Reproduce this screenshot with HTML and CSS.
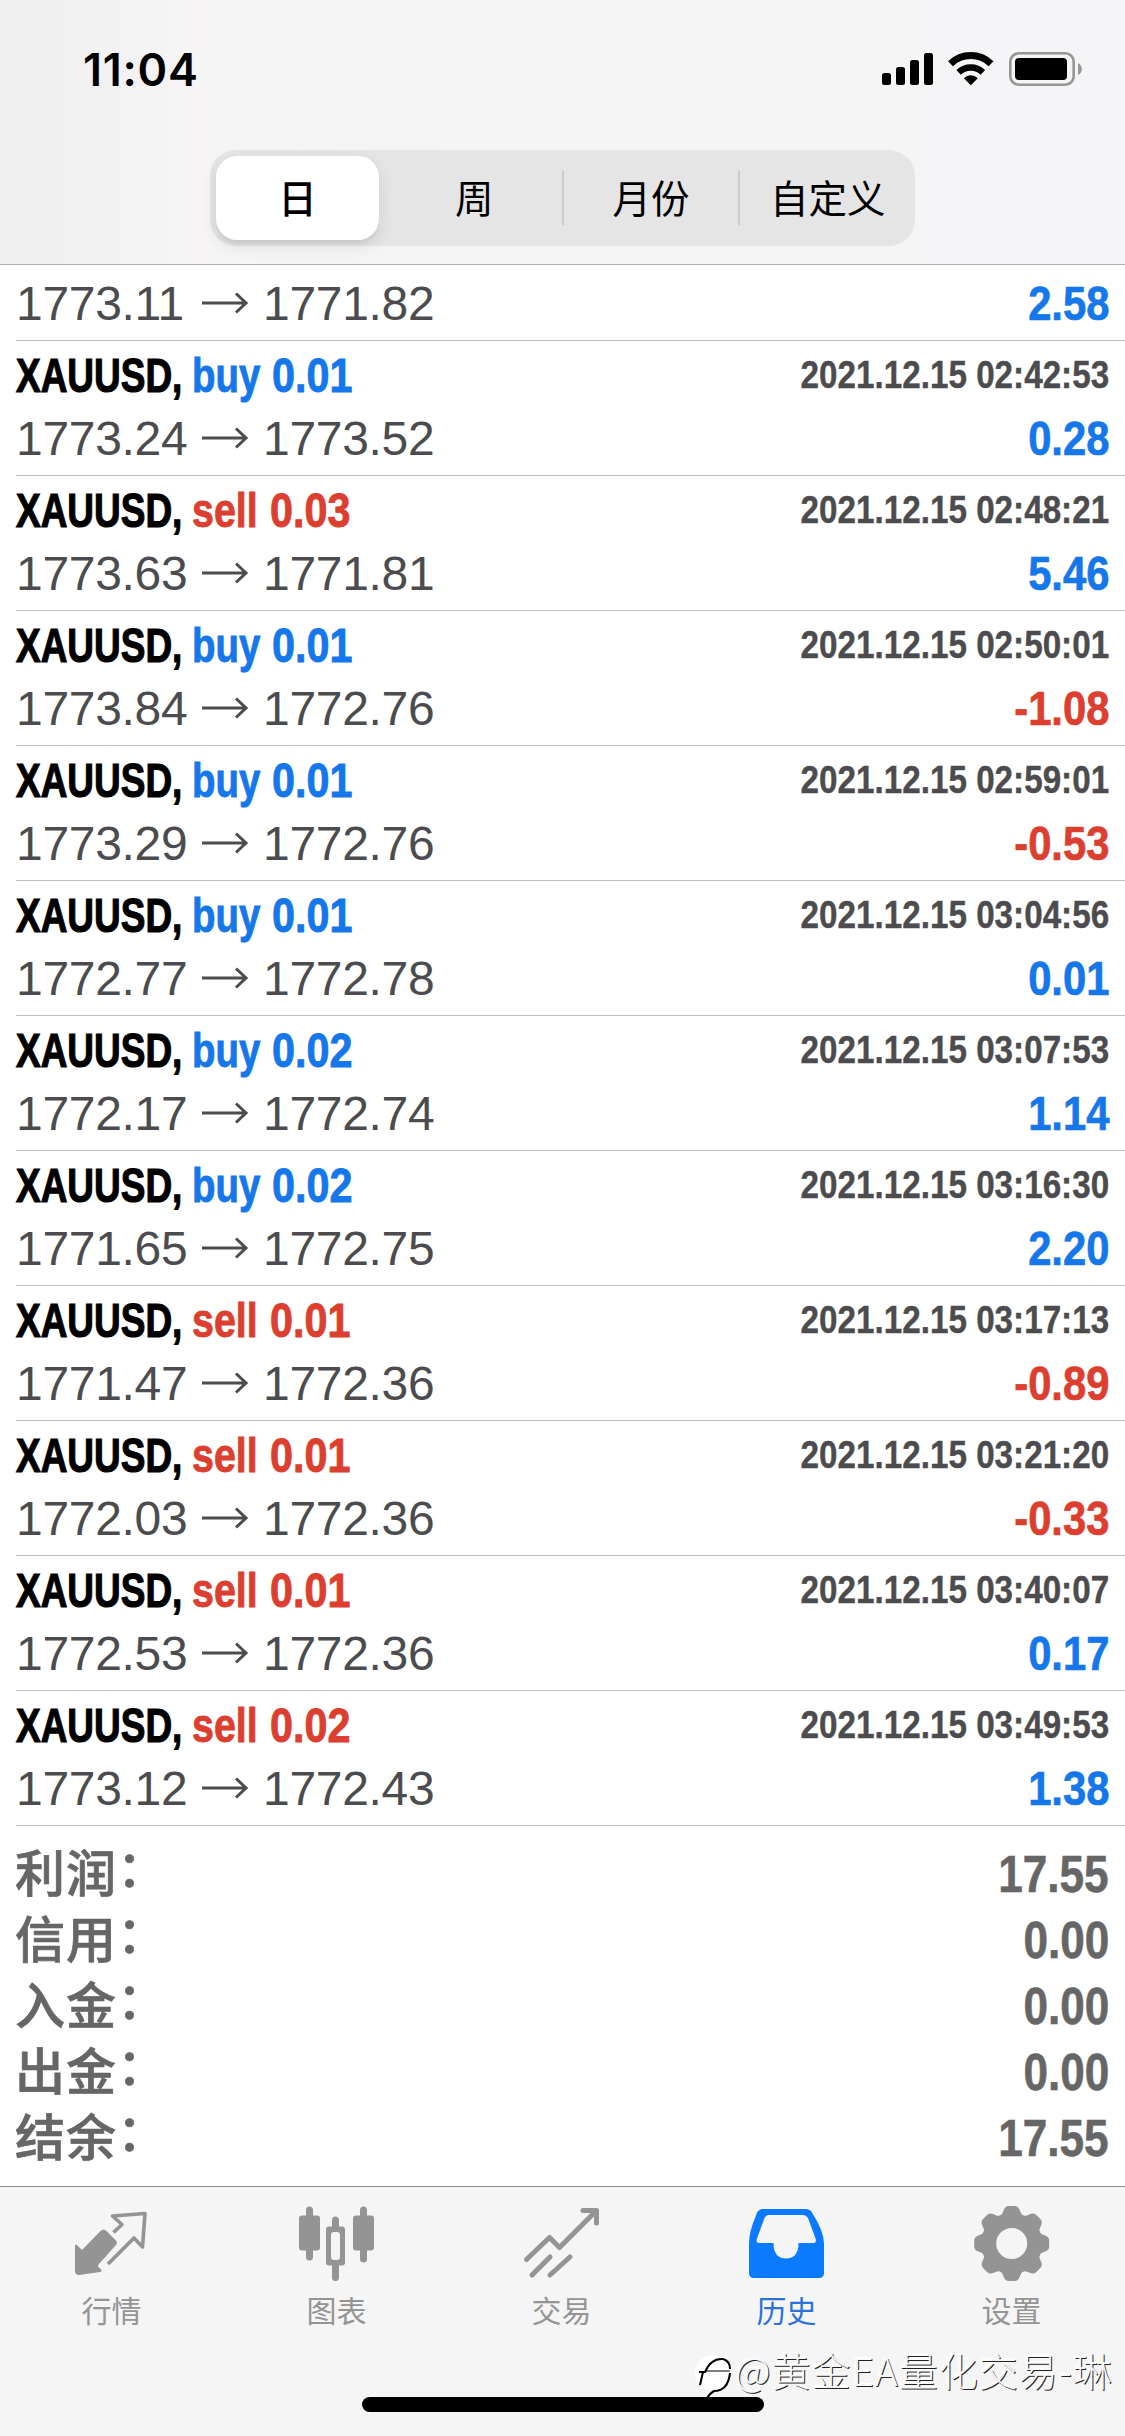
FILE: index.html
```html
<!DOCTYPE html>
<html lang="zh-CN">
<head>
<meta charset="utf-8">
<title>历史</title>
<link rel="stylesheet" href="styles.css">
</head>
<body>
<div class="screen">
  <header class="header">
    <div class="status">
      <span class="clock">11:04</span>
      <svg class="status-icons" width="228" height="40" viewBox="0 0 228 40">
        <rect x="12" y="23" width="9" height="12" rx="2.500"/><rect x="26" y="17" width="9" height="18" rx="2.500"/><rect x="40" y="10" width="9" height="25" rx="2.500"/><rect x="54" y="3" width="9" height="32" rx="2.500"/>
        <g fill="none" stroke="#000"><path stroke-width="7" d="M80.500 13.800a29 29 0 0 1 40.500 0"/><path stroke-width="6.500" d="M88.600 22.400a17.500 17.500 0 0 1 24.300 0"/></g>
        <path d="M100.800 35.200l-7-7a9.900 9.900 0 0 1 14 0z"/>
        <rect x="140.300" y="3.300" width="63.400" height="31.400" rx="8.500" fill="none" stroke="#969696" stroke-width="2.600"/><rect x="145" y="8" width="52" height="22" rx="4"/><path fill="#969696" d="M208 13q3.800 2 3.800 6t-3.800 6z"/>
      </svg>
    </div>
    <nav class="segments">
      <span class="segment segment-on">日</span><span class="segment">周</span><span class="segment divided">月份</span><span class="segment divided">自定义</span>
    </nav>
  </header>
  <main class="history" id="history"></main>
  <section class="summary">
    <div class="total"><span class="total-name">利润</span><span class="colon">：</span><b>17.55</b></div>
    <div class="total"><span class="total-name">信用</span><span class="colon">：</span><b>0.00</b></div>
    <div class="total"><span class="total-name">入金</span><span class="colon">：</span><b>0.00</b></div>
    <div class="total"><span class="total-name">出金</span><span class="colon">：</span><b>0.00</b></div>
    <div class="total"><span class="total-name">结余</span><span class="colon">：</span><b>17.55</b></div>
  </section>
  <footer class="tabs">
    <a class="tab"><svg width="90" height="90" viewBox="0 0 90 90"><path d="M10 29q0-2.500 2-1l5 5L35.500 14q3-3 6 0l9 9q3 3 0 5.500L34 47q-2 2 0 3.500l2 2q1.500 2-1 2.500L14 58q-4 0-4-4z"/><path fill="none" stroke="#949494" stroke-width="3.600" stroke-linejoin="round" d="M48.500 15.500l8.500-8L47.500-1 80-3.500 77.500 30 69 21 43 47"/></svg>行情</a>
    <a class="tab"><svg width="90" height="90" viewBox="0 0 90 90"><rect x="9" y="-1.500" width="21" height="35" rx="3"/><rect x="16" y="-10.500" width="7" height="54" rx="3.500"/><rect x="63" y="-1.500" width="21" height="35" rx="3"/><rect x="70" y="-10.500" width="7" height="56" rx="3.500"/><path fill-rule="evenodd" d="M39 9.500h3V3a3.500 3.500 0 0 1 7 0V9.500h3q3 0 3 3v33q0 3-3 3h-3v12a3.500 3.500 0 0 1-7 0V48.500h-3q-3 0-3-3V12.500q0-3 3-3zm5 5.500q-3 0-3 3v22q0 3 3 3h3q3 0 3-3v-22q0-3-3-3z"/></svg>图表</a>
    <a class="tab"><svg width="90" height="90" viewBox="0 0 90 90"><g fill="none" stroke="#949494" stroke-width="5" stroke-linecap="round" stroke-linejoin="round"><path d="M11.500 42.500l23-22 10 10L81-6M68-6.500h13.500V6M17 58l18-18M35 58l20-18"/></g></svg>交易</a>
    <a class="tab tab-on"><svg width="90" height="90" viewBox="0 0 90 90"><path fill-rule="evenodd" d="M22-8h44q4 0 6 3.500 12 19 12 31V56q0 5-5 5H14q-5 0-5-5V26.500q0-12 7-28 2-6.500 6-6.500zm7 6q-3 0-4.500 3l-7.500 20.500q-1.500 4.500 2 4.500H33.500q0 15.500 12.500 15.500t12.500-15.500h15q3.500 0 2-4.500L68 1q-2-3-5-3z"/></svg>历史</a>
    <a class="tab"><svg width="90" height="90" viewBox="-46.700 -9 90 90"><circle cy="17.500" r="23" fill="none" stroke="#949494" stroke-width="15"/><g id="cogs"></g></svg>设置</a>
  </footer>
  <div class="home"></div>
  <div class="mark"><svg width="40" height="46" viewBox="0 0 40 46"><circle cx="19" cy="19" r="18" fill="#fff"/><g fill="none" stroke="#000"><path stroke-width="2" d="M5 18h6q6-14 18-13 7 2 7 10M9 18L6 31"/><path stroke-width="1" d="M12 17h24"/><path stroke-width="2.200" d="M36 19q-2 18-16 18-5 3-7 7"/></g></svg><span>@黄金EA量化交易-琳</span></div>
</div>
<script src="history.js"></script>
</body>
</html>
```
FILE: styles.css
```css
* { box-sizing: border-box; }
body { margin: 0; background: #fff; font-family: "Liberation Sans", "Noto Sans CJK SC", sans-serif; }
.screen { position: relative; width: 1125px; height: 2436px; display: flex; flex-direction: column; overflow: hidden; background: #fff; }

.header { height: 265px; border-bottom: 1px solid #b0b0b2; background: linear-gradient(90deg, #efeff0 0, #f6f4f4 190px, #f5f5f5 600px, #f5f5f8 100%); }
.status { display: flex; justify-content: space-between; height: 150px; padding: 50px 27px 0 83px; }
.clock { font: 600 45px/40px Inter, sans-serif; letter-spacing: .7px; }
.segments { display: flex; width: 705px; height: 96px; margin-left: 210px; padding: 6px 0 6px 6px; border-radius: 26px; background: #e5e5e6; }
.segment { width: 177px; display: flex; align-items: center; justify-content: center; padding: 0 0 3px 2px; font: 400 38.5px/1 "Noto Sans CJK SC", sans-serif; }
.segment-on { width: 163px; height: 84px; padding-left: 0; background: #fff; border-radius: 21px; margin-right: 6px; font-weight: 500; box-shadow: 0 6px 16px rgba(0,0,0,.1), 0 4px 2px rgba(0,0,0,.04); }
.divided { background: linear-gradient(#cbcbcd, #cbcbcd) 0 center / 2px 54px no-repeat; }

.trade { height: 135px; margin-left: 16px; padding: 3px 16px 0 0; border-bottom: 1px solid #bfbfc1; }
.trade-cut { height: 76px; padding-top: 7px; }
.line { display: flex; height: 63px; line-height: 63px; font-size: 48px; color: #4c4c4e; white-space: nowrap; }
.symbol, .side, .lot { font-weight: 700; transform-origin: 0 0; -webkit-text-stroke: .9px; }
.symbol { width: 176px; color: #000; transform: scaleX(.77); -webkit-text-stroke: 1.2px; }
.side-buy { width: 80px; transform: scaleX(.8); }
.side-sell { width: 78px; transform: scaleX(.82); }
.lot { width: 90px; transform: scaleX(.86); }
.time { margin-left: auto; font-size: 39px; line-height: 61px; font-weight: 700; transform: scaleX(.852); transform-origin: 100% 0; -webkit-text-stroke: .4px; }
.arrow { width: 74px; height: 63px; }
.price { width: 173px; letter-spacing: -.3px; }
.profit { margin-left: auto; font-weight: 700; transform: scaleX(.87); transform-origin: 100% 0; -webkit-text-stroke: .7px; }
.buy { color: #1577ea; }
.sell { color: #dc3f30; }

.summary { height: 360px; padding: 16px 16px 0 15px; }
.total { display: flex; height: 66px; line-height: 66px; color: #666; }
.total-name, .colon { font: 500 50px/57px "Noto Sans CJK SC", sans-serif; -webkit-text-stroke: .7px; }
.total-name { width: 102px; letter-spacing: 1px; }
.colon { line-height: 47px; }
.total b { margin-left: auto; font-size: 51px; transform: scaleX(.865); transform-origin: 100% 0; -webkit-text-stroke: .6px; }

.tabs { height: 250px; border-top: 1px solid #8e8e90; background: #f5f5f5; display: flex; }
.tab { width: 225px; display: flex; flex-direction: column; align-items: center; padding: 30px 2px 0 0; color: #949494; fill: #949494; font: 400 30px/36px "Noto Sans CJK SC", sans-serif; }
.tab svg { overflow: visible; flex: none; margin: 0 3px -16px 0; }
.tab-on { color: #2d72d9; fill: #0a7aff; }
.home { position: absolute; left: 362px; top: 2397px; width: 402px; height: 15px; border-radius: 8px; background: #000; }
.mark { position: absolute; left: 694px; top: 2354px; display: flex; white-space: nowrap; }
.mark span { font: 300 39px/30px "Noto Sans CJK SC", sans-serif; letter-spacing: 1px; color: #f8f8f8; text-shadow: 1px 1px 0 #222, -1px -1px 0 #fff; margin-left: 1px; }
```
FILE: history.js
```js
const trades = [
  ["buy", "0.01", "02:42:53", "1773.24", "1773.52", "0.28"],
  ["sell", "0.03", "02:48:21", "1773.63", "1771.81", "5.46"],
  ["buy", "0.01", "02:50:01", "1773.84", "1772.76", "-1.08"],
  ["buy", "0.01", "02:59:01", "1773.29", "1772.76", "-0.53"],
  ["buy", "0.01", "03:04:56", "1772.77", "1772.78", "0.01"],
  ["buy", "0.02", "03:07:53", "1772.17", "1772.74", "1.14"],
  ["buy", "0.02", "03:16:30", "1771.65", "1772.75", "2.20"],
  ["sell", "0.01", "03:17:13", "1771.47", "1772.36", "-0.89"],
  ["sell", "0.01", "03:21:20", "1772.03", "1772.36", "-0.33"],
  ["sell", "0.01", "03:40:07", "1772.53", "1772.36", "0.17"],
  ["sell", "0.02", "03:49:53", "1773.12", "1772.43", "1.38"]
];
const prices = (from, to, profit) => `<div class="line"><span class="price">${from}</span>
<svg class="arrow" viewBox="0 0 74 63"><path d="M13 31h44M47 21.500l10 9.500-10 9.500" fill="none" stroke="#4c4c4e" stroke-width="3"/></svg>
<span class="price">${to}</span><span class="profit ${profit[0] === "-" ? "sell" : "buy"}">${profit}</span></div>`;
document.getElementById("history").innerHTML =
  `<div class="trade trade-cut">${prices("1773.11", "1771.82", "2.58")}</div>` +
  trades.map(([side, lot, time, from, to, profit]) => `<div class="trade"><div class="line">
<span class="symbol">XAUUSD,</span><span class="side side-${side} ${side}">${side}</span><span class="lot ${side}">${lot}</span><span class="time">2021.12.15 ${time}</span></div>${prices(from, to, profit)}</div>`).join("");

// Eight teeth of the settings gear, rotated round its centre.
document.getElementById("cogs").innerHTML = [0, 45, 90, 135, 180, 225, 270, 315]
  .map(a => `<path transform="rotate(${a} 0 17.500)" d="M-13-9Q-10-10-8-16q1.500-4 5-4h6q3.500 0 5 4 2 6 5 7z"/>`).join("");
```
